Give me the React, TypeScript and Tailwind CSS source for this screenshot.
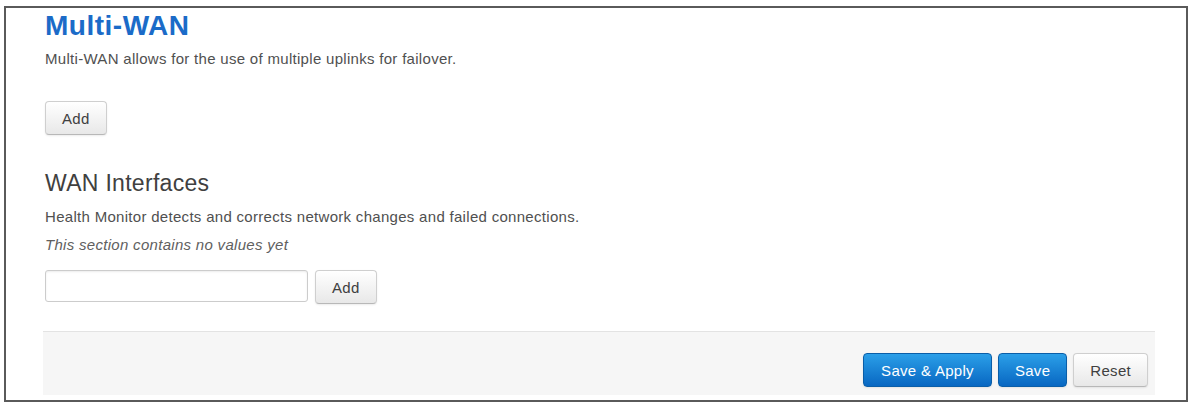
const font = { fontFamily: '"Liberation Sans", Arial, Helvetica, sans-serif' }

function Button({ label, primary, wide }: { label: string; primary?: boolean; wide?: boolean }) {
  const base =
    "h-[34px] rounded-[4px] border text-[15px] tracking-[0.3px] leading-none shadow-[0_1px_2px_rgba(0,0,0,0.08)]"
  const pad = wide ? "px-[17px]" : "px-4"
  const look = primary
    ? "text-white border-[#0a5ea8] bg-gradient-to-b from-[#2b9fe8] to-[#0867c2]"
    : "text-[#404040] border-[#cfcfcf] border-b-[#b8b8b8] bg-gradient-to-b from-white to-[#e8e8e8]"
  return <button className={`${base} ${pad} ${look}`}>{label}</button>
}

export default function App() {
  return (
    <div className="bg-white w-[1190px] h-[404px] pt-[6px] pl-[4px]" style={font}>
      <div className="w-[1184px] h-[396px] border-2 border-[#5a5a5a] pl-[39px] pr-[31px] pt-[2px] flex flex-col">
        <h2 className="text-[28px] font-bold leading-[32px] tracking-[0.5px] text-[#1b6bc8]">
          Multi-WAN
        </h2>
        <p className="mt-[7px] text-[15px] leading-[20px] tracking-[0.3px] text-[#505050]">
          Multi-WAN allows for the use of multiple uplinks for failover.
        </p>
        <div className="mt-[32px] flex">
          <Button label="Add" />
        </div>

        <h3 className="mt-[34px] text-[23px] leading-[28px] tracking-[0.3px] text-[#404040]">
          WAN Interfaces
        </h3>
        <p className="mt-[10px] text-[15px] leading-[20px] tracking-[0.3px] text-[#505050]">
          Health Monitor detects and corrects network changes and failed connections.
        </p>
        <p className="mt-[8px] text-[15px] leading-[20px] tracking-[0.3px] italic text-[#606060]">
          This section contains no values yet
        </p>
        <div className="mt-[15px] flex items-start gap-[7px]">
          <input
            type="text"
            className="w-[263px] h-[32px] rounded-[3px] border border-[#cccccc] bg-white shadow-[inset_0_1px_2px_rgba(0,0,0,0.08)] outline-none px-2 text-[14px]"
          />
          <Button label="Add" />
        </div>

        <div className="mt-[27px] -ml-[2px] h-[64px] bg-[#f6f6f6] border-t border-[#e3e3e3] flex items-start justify-end gap-[6px] pt-[21px] pr-[7px]">
          <Button label="Save & Apply" primary wide />
          <Button label="Save" primary />
          <Button label="Reset" />
        </div>
      </div>
    </div>
  )
}
